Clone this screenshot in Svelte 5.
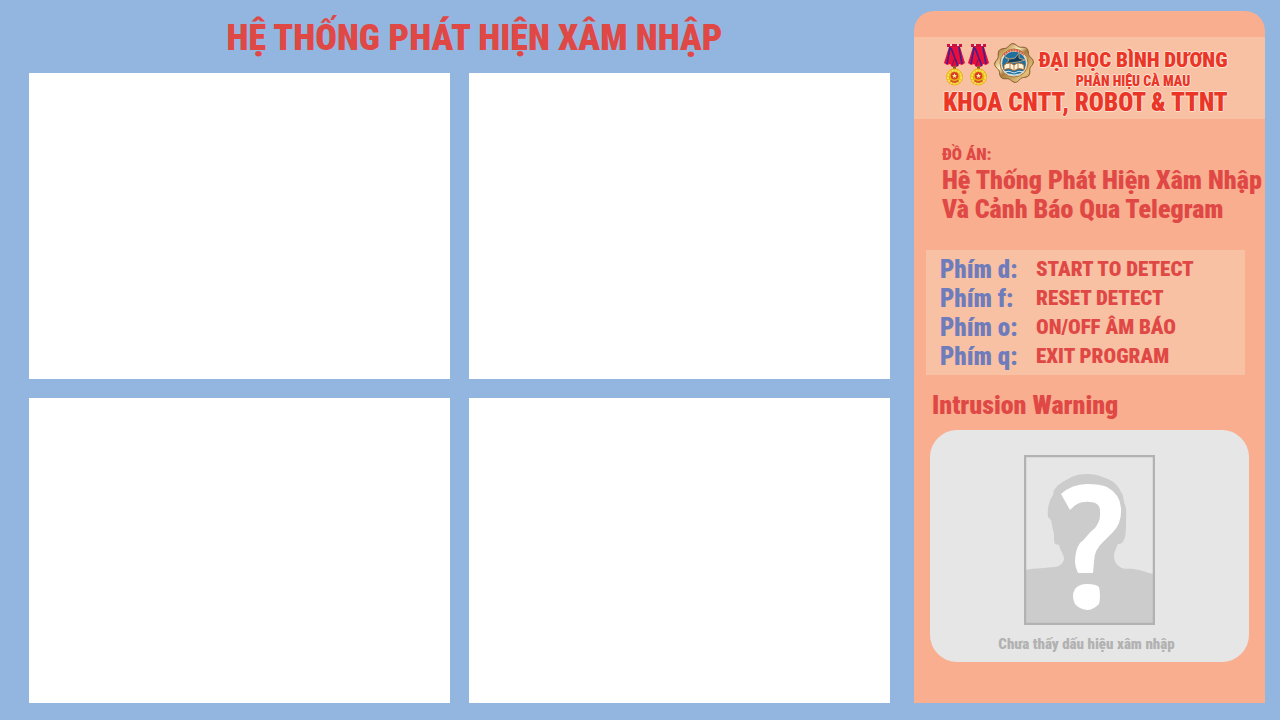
<script>
  const cameras = ['Camera 1', 'Camera 2', 'Camera 3', 'Camera 4'];
  const shortcuts = [
    { key: 'Phím d:', action: 'START TO DETECT' },
    { key: 'Phím f:', action: 'RESET DETECT' },
    { key: 'Phím o:', action: 'ON/OFF ÂM BÁO' },
    { key: 'Phím q:', action: 'EXIT PROGRAM' },
  ];

  // Outline of the emblem: a circle with eight soft lobes.
  const emblem =
    Array.from({ length: 96 }, (_, i) => {
      const a = (i / 96) * Math.PI * 2;
      const r = 18.1 + 1.3 * Math.cos(8 * a + 0.6);
      return `${i ? 'L' : 'M'}${(20 + r * Math.cos(a)).toFixed(2)} ${(20 + r * Math.sin(a)).toFixed(2)}`;
    }).join('') + 'Z';
</script>

{#snippet medal()}
  <svg class="medal" viewBox="0 0 23 44" aria-hidden="true">
    <path d="M6 4H17L22 20L19 22L16 21L14 24L11.5 23L9 24L7 21L4 22L1 20Z" fill="#ea0c3a" />
    <path d="M7 4L4 21M16 4L19 21M8 5L15 23" stroke="#3b2291" stroke-width="1.6" fill="none" />
    <path d="M12 14L9 23" stroke="#8c1455" stroke-width="1.2" fill="none" />
    <path d="M4 1H19V4H4Z" fill="#c8143c" />
    <path d="M7 1H9V3H7ZM14 1H16V3H14Z" fill="#f3d3dc" />
    <path d="M10 23H13V27H10Z" fill="#8b6328" />
    <circle cx="11.5" cy="34" r="8.4" fill="#e8b40c" />
    <circle cx="11.5" cy="34" r="6.6" fill="none" stroke="#f8e45c" stroke-width="1.8" stroke-dasharray="2.4 .7" />
    <circle cx="11.5" cy="32.8" r="3.8" fill="#dc3a28" />
    <path d="M11.5 30.2L12.2 32L14 32.1L12.6 33.2L13.1 35L11.5 34L9.9 35L10.4 33.2L9 32.1L10.8 32Z" fill="#fff0a0" />
    <path d="M7.5 37.5Q11.5 40.5 15.5 37.5" stroke="#d9532a" stroke-width="1.8" fill="none" />
  </svg>
{/snippet}

<main class="page">
  <section class="monitor">
    <h1>HỆ THỐNG PHÁT HIỆN XÂM NHẬP</h1>
    <div class="cameras">
      {#each cameras as camera}
        <div class="camera" role="img" aria-label={camera}></div>
      {/each}
    </div>
  </section>

  <aside class="sidebar">
    <header class="school">
      <div class="school-top">
        <div class="medals">{@render medal()}{@render medal()}</div>
        <svg class="emblem" viewBox="0 0 40 40" aria-hidden="true">
          <defs>
            <linearGradient id="gold" x1="0" y1="0" x2="1" y2="1">
              <stop offset="0" stop-color="#7b5a2c" />
              <stop offset=".2" stop-color="#c79c58" />
              <stop offset=".38" stop-color="#fbeec2" />
              <stop offset=".5" stop-color="#a97c3e" />
              <stop offset=".8" stop-color="#e6c078" />
              <stop offset="1" stop-color="#6f4a1e" />
            </linearGradient>
          </defs>
          <path d={emblem} fill="url(#gold)" stroke="#7d5826" stroke-width="1" />
          <circle cx="20" cy="20" r="14" fill="#e6d8c2" stroke="#a8783c" stroke-width="1" />
          <path d="M10 12A13 13 0 0 1 30 12" fill="none" stroke="#e0563c" stroke-width="2" stroke-dasharray="2 .7" />
          <circle cx="20" cy="20.5" r="11.8" fill="#1f6f9f" />
          <path d="M11 14L16 16L21 15L25 10L25 15L31 17L24 19L16 20L12 21L15 17Z" fill="#14405f" stroke="#d2b27c" stroke-width=".8" />
          <path d="M10 22Q15 18 20 22Q25 18 30 22V27Q25 24 20 28Q15 24 10 27Z" fill="#fff5da" stroke="#a2622c" stroke-width="1" />
          <path d="M16 21V26M20 22V28M24 21V26" stroke="#a2622c" stroke-width=".8" />
          <path d="M10 29Q15 27 20 30Q25 27 30 29M14 31Q20 33 26 31" fill="none" stroke="#cfe6ee" stroke-width="1" />
        </svg>
        <div class="names">
          <p class="university">ĐẠI HỌC BÌNH DƯƠNG</p>
          <p class="campus">PHÂN HIỆU CÀ MAU</p>
        </div>
      </div>
      <p class="faculty">KHOA CNTT, ROBOT &amp; TTNT</p>
    </header>

    <section class="project">
      <p class="label">ĐỒ ÁN:</p>
      <h2>Hệ Thống Phát Hiện Xâm Nhập<br />Và Cảnh Báo Qua Telegram</h2>
    </section>

    <dl class="shortcuts">
      {#each shortcuts as { key, action }}
        <div class="shortcut">
          <dt>{key}</dt>
          <dd>{action}</dd>
        </div>
      {/each}
    </dl>

    <section class="warning">
      <h2>Intrusion Warning</h2>
      <figure>
        <svg class="portrait" viewBox="0 0 131 170" aria-hidden="true">
          <path
            d="M1 115C12 113 22 113 31 112C37 111 40 107 40 103C39 98 36 95 35 90L31 89C29 85 31 80 29 75L27 65L24 62C23 56 25 45 29 40C30 36 29 35 32 33C34 29 39 27 44 24C50 20 57 19 64 19C72 19 79 22 84 24C91 27 95 32 97 37C100 41 99 45 101 50C103 55 102 62 102 66C102 75 102 80 100 85C98 88 97 89 94 89C92 93 90 97 90 101C90 105 92 110 96 112C101 115 104 113 109 114C118 115 123 118 130 119V169H1Z"
            fill="#ccc"
          />
          <path
            d="M37 39Q48 29 63 29Q76 29 83 32Q96 39 97 53Q98 68 89 77L79 87Q70 95 70 107L69 118H54Q51 112 51 107Q51 95 56 88Q59 86 63 81Q67 76 71 73Q76 66 76 61V54Q75 48 67 47Q54 45 46 55Z"
            fill="#fff"
          />
          <path d="M51 134Q55 129 63 129Q72 129 75 132Q77 141 75 149Q69 155 63 155Q55 154 51 149Q47 141 51 134Z" fill="#fff" />
          <rect x="1" y="1" width="129" height="168" fill="none" stroke="#b2b2b2" stroke-width="2.5" />
        </svg>
        <figcaption>Chưa thấy dấu hiệu xâm nhập</figcaption>
      </figure>
    </section>
  </aside>
</main>

<style>
  :global(body) {
    background: #93b6e0;
  }

  .page {
    box-sizing: border-box;
    min-height: 100vh;
    display: flex;
    gap: 24px;
    padding: 11px 15px 17px 29px;
    font-family: 'Roboto Condensed', 'Open Sans Condensed', sans-serif;
    font-weight: 900;
    color: #e04845;
  }

  h1,
  h2,
  p,
  dl,
  dd,
  figure {
    margin: 0;
    font-weight: inherit;
  }

  .monitor {
    flex: 861;
  }

  h1 {
    padding: 3px 0 11px 30px;
    font-size: 36px;
    line-height: 48px;
    text-align: center;
  }

  .cameras {
    display: grid;
    grid-template-columns: 1fr 1fr;
    gap: 19px;
  }

  .camera {
    aspect-ratio: 842 / 611;
    background: #fff;
  }

  .sidebar {
    flex: 351;
    box-sizing: border-box;
    padding-top: 26px;
    border-radius: 20px 20px 0 0;
    background: #f8ae8f;
  }

  .school {
    display: flex;
    flex-direction: column;
    align-items: center;
    padding: 6px 8px 3px 0;
    background: #f9c1a4;
    color: #e93627;
    text-shadow:
      1px 0 #fde0d2,
      -1px 0 #fde0d2,
      0 1px #fde0d2,
      0 -1px #fde0d2;
  }

  .school-top {
    display: flex;
    gap: 4px;
    height: 47px;
  }

  .medals {
    display: flex;
    gap: 1px;
  }

  .medal {
    width: 23px;
    height: 44px;
  }

  .emblem {
    width: 40px;
    height: 40px;
  }

  .university {
    font-size: 21px;
    line-height: 34px;
  }

  .campus {
    font-size: 14px;
    line-height: 8px;
    text-align: center;
  }

  .faculty {
    font-size: 25px;
    line-height: 26px;
  }

  .project {
    padding: 24px 0 0 28px;
  }

  .label {
    font-size: 17px;
    line-height: 23px;
  }

  .project h2 {
    font-size: 26px;
    line-height: 29px;
    white-space: nowrap;
  }

  .shortcuts {
    margin: 26px 20px 0 12px;
    padding: 5px 14px 4px;
    background: #f9c1a4;
  }

  .shortcut {
    display: grid;
    grid-template-columns: 96px 1fr;
    align-items: center;
    line-height: 29px;
  }

  dt {
    color: #6e7cbc;
    font-size: 25px;
  }

  dd {
    font-size: 21px;
  }

  .warning {
    padding: 16px 16px 41px;
  }

  .warning h2 {
    padding-left: 2px;
    font-size: 26px;
    line-height: 29px;
  }

  figure {
    display: flex;
    flex-direction: column;
    align-items: center;
    gap: 10px;
    margin-top: 10px;
    padding: 25px 0 9px;
    border-radius: 27px;
    background: #e6e6e6;
  }

  .portrait {
    width: 131px;
    height: 170px;
  }

  figcaption {
    padding-right: 6px;
    color: #b2b2b2;
    font-size: 15px;
    line-height: 18px;
  }
</style>
